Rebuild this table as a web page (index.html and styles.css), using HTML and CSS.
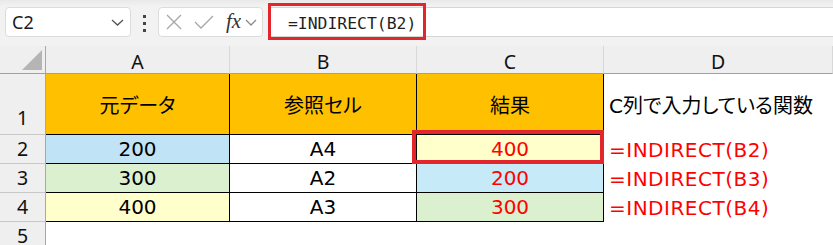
FILE: index.html
```html
<!DOCTYPE html>
<html lang="ja">
  <head>
    <meta charset="UTF-8" />
    <title>INDIRECT</title>
    <link rel="stylesheet" href="styles.css">
  </head>
  <body>
    <div class="formula-bar">
      <div class="name-box">
        <span>C2</span>
        <svg class="chevron" width="13" height="7" viewBox="0 0 13 7">
          <polyline points="1,1 6.5,6 12,1" />
        </svg>
      </div>
      <div class="grip"><i></i><i></i><i></i></div>
      <div class="fx-buttons">
        <svg class="btn-icon" width="16" height="16" viewBox="0 0 16 16">
          <line x1="1" y1="1" x2="15" y2="15" />
          <line x1="15" y1="1" x2="1" y2="15" />
        </svg>
        <svg class="btn-icon" width="20" height="16" viewBox="0 0 20 16">
          <polyline points="1,8 7,14 19,2" />
        </svg>
        <span class="fx">fx</span>
        <svg class="chevron small" width="12" height="7" viewBox="0 0 12 7">
          <polyline points="1,1 6,6 11,1" />
        </svg>
      </div>
      <div class="formula-field">
        <span class="formula-text">=INDIRECT(B2)</span>
      </div>
    </div>

    <div class="sheet">
      <div class="corner"><span class="corner-mark"></span></div>
      <div class="col-head">A</div>
      <div class="col-head">B</div>
      <div class="col-head">C</div>
      <div class="col-head">D</div>

      <div class="row-head tall">1</div>
      <div class="cell boxed orange jp">元データ</div>
      <div class="cell boxed orange jp">参照セル</div>
      <div class="cell boxed orange jp">結果</div>
      <div class="cell left jp">C列で入力している関数</div>

      <div class="row-head">2</div>
      <div class="cell boxed blue">200</div>
      <div class="cell boxed">A4</div>
      <div class="cell boxed yellow red-text selected">400</div>
      <div class="cell left red-text formula">=INDIRECT(B2)</div>

      <div class="row-head">3</div>
      <div class="cell boxed green">300</div>
      <div class="cell boxed">A2</div>
      <div class="cell boxed sky red-text">200</div>
      <div class="cell left red-text formula">=INDIRECT(B3)</div>

      <div class="row-head">4</div>
      <div class="cell boxed yellow">400</div>
      <div class="cell boxed">A3</div>
      <div class="cell boxed green red-text">300</div>
      <div class="cell left red-text formula">=INDIRECT(B4)</div>

      <div class="row-head">5</div>
      <div class="cell"></div>
      <div class="cell"></div>
      <div class="cell"></div>
      <div class="cell"></div>
    </div>
  </body>
</html>
```

FILE: styles.css
```css
* {
  box-sizing: border-box;
  margin: 0;
  padding: 0;
}

body {
  width: 833px;
  height: 245px;
  overflow: hidden;
  background: #fff;
  font-family: "DejaVu Sans", "Noto Sans CJK JP", sans-serif;
  color: #000;
}

/* formula bar */

.formula-bar {
  display: flex;
  align-items: flex-start;
  height: 46px;
  padding-top: 7px;
  background: linear-gradient(#e9e9e9, #f2f2f2 6px);
}

.name-box {
  display: flex;
  align-items: center;
  justify-content: space-between;
  width: 126px;
  height: 30px;
  margin-left: 5px;
  padding: 0 6px 0 6px;
  background: #fff;
  border: 1px solid #dcdcdc;
  border-radius: 4px;
  font-family: "Noto Sans", sans-serif;
  font-size: 18px;
  color: #1a1a1a;
}

.chevron polyline {
  fill: none;
  stroke: #555;
  stroke-width: 1.3;
}

.chevron.small polyline {
  stroke: #8a8a8a;
}

.grip {
  display: flex;
  flex-direction: column;
  align-items: center;
  gap: 4px;
  width: 27px;
  padding-top: 8px;
}

.grip i {
  width: 3px;
  height: 3px;
  background: #444;
}

.fx-buttons {
  display: flex;
  align-items: center;
  width: 105px;
  height: 30px;
  padding-left: 7px;
  background: #fff;
  border: 1px solid #dcdcdc;
  border-radius: 4px;
}

.btn-icon line,
.btn-icon polyline {
  fill: none;
  stroke: #a6a6a6;
  stroke-width: 1.3;
}

.btn-icon + .btn-icon {
  margin-left: 12px;
}

.fx {
  margin: 0 4px 2px 12px;
  font-family: "Liberation Serif", serif;
  font-style: italic;
  font-size: 21px;
  color: #333;
}

.formula-field {
  flex: 1;
  height: 30px;
  margin-left: 5px;
  background: #fff;
  border-top: 1px solid #d6d6d6;
  border-bottom: 1px solid #d6d6d6;
}

.formula-text {
  display: flex;
  align-items: center;
  width: 158px;
  height: 37px;
  margin-top: -5px;
  padding: 3px 0 0 17px;
  border: 3px solid #e3262b;
  font-family: "DejaVu Sans Mono", monospace;
  font-size: 16.4px;
  color: #1f1f1f;
}

/* sheet */

.sheet {
  display: grid;
  grid-template-columns: 46px 184px 187px 187px 1fr;
  grid-template-rows: 28px 61px 29px 29px 29px 29px;
}

.corner,
.col-head,
.row-head {
  background: #efefef;
  font-family: "Noto Sans", sans-serif;
  font-size: 19.5px;
  color: #111;
}

.corner {
  display: flex;
  justify-content: flex-end;
  align-items: flex-end;
  padding: 0 3px 3px 0;
  border-right: 1px solid #a8a8a8;
  border-bottom: 1px solid #a0a0a0;
}

.corner-mark {
  width: 0;
  height: 0;
  border-left: 20px solid transparent;
  border-bottom: 20px solid #b5b5b5;
}

.col-head {
  display: flex;
  justify-content: center;
  align-items: center;
  padding-top: 3px;
  border-right: 1px solid #d8d8d8;
  border-bottom: 1px solid #a0a0a0;
}

.row-head {
  display: flex;
  justify-content: center;
  align-items: flex-end;
  padding-bottom: 1px;
  line-height: 26px;
  border-right: 1px solid #a8a8a8;
  border-bottom: 1px solid #c8c8c8;
}

.row-head.tall {
  padding-bottom: 3px;
}

.cell {
  position: relative;
  display: flex;
  justify-content: center;
  align-items: center;
  font-size: 20px;
  white-space: nowrap;
}

.cell.left {
  justify-content: flex-start;
  padding-left: 5px;
}

.boxed {
  border-right: 1px solid #000;
  border-bottom: 1px solid #000;
}

.jp {
  font-feature-settings: "palt";
}

.orange { background: #ffc000; }
.blue { background: #c0e4f5; }
.sky { background: #c7eaf9; }
.green { background: #daf0cf; }
.yellow { background: #ffffcc; }

.red-text {
  color: #ff0000;
}

.formula {
  letter-spacing: 0.5px;
}

/* red frame drawn over the active cell */
.selected::after {
  content: "";
  position: absolute;
  top: -5px;
  left: -5px;
  right: -1px;
  bottom: -1px;
  border: 4px solid #e3262b;
}
```
